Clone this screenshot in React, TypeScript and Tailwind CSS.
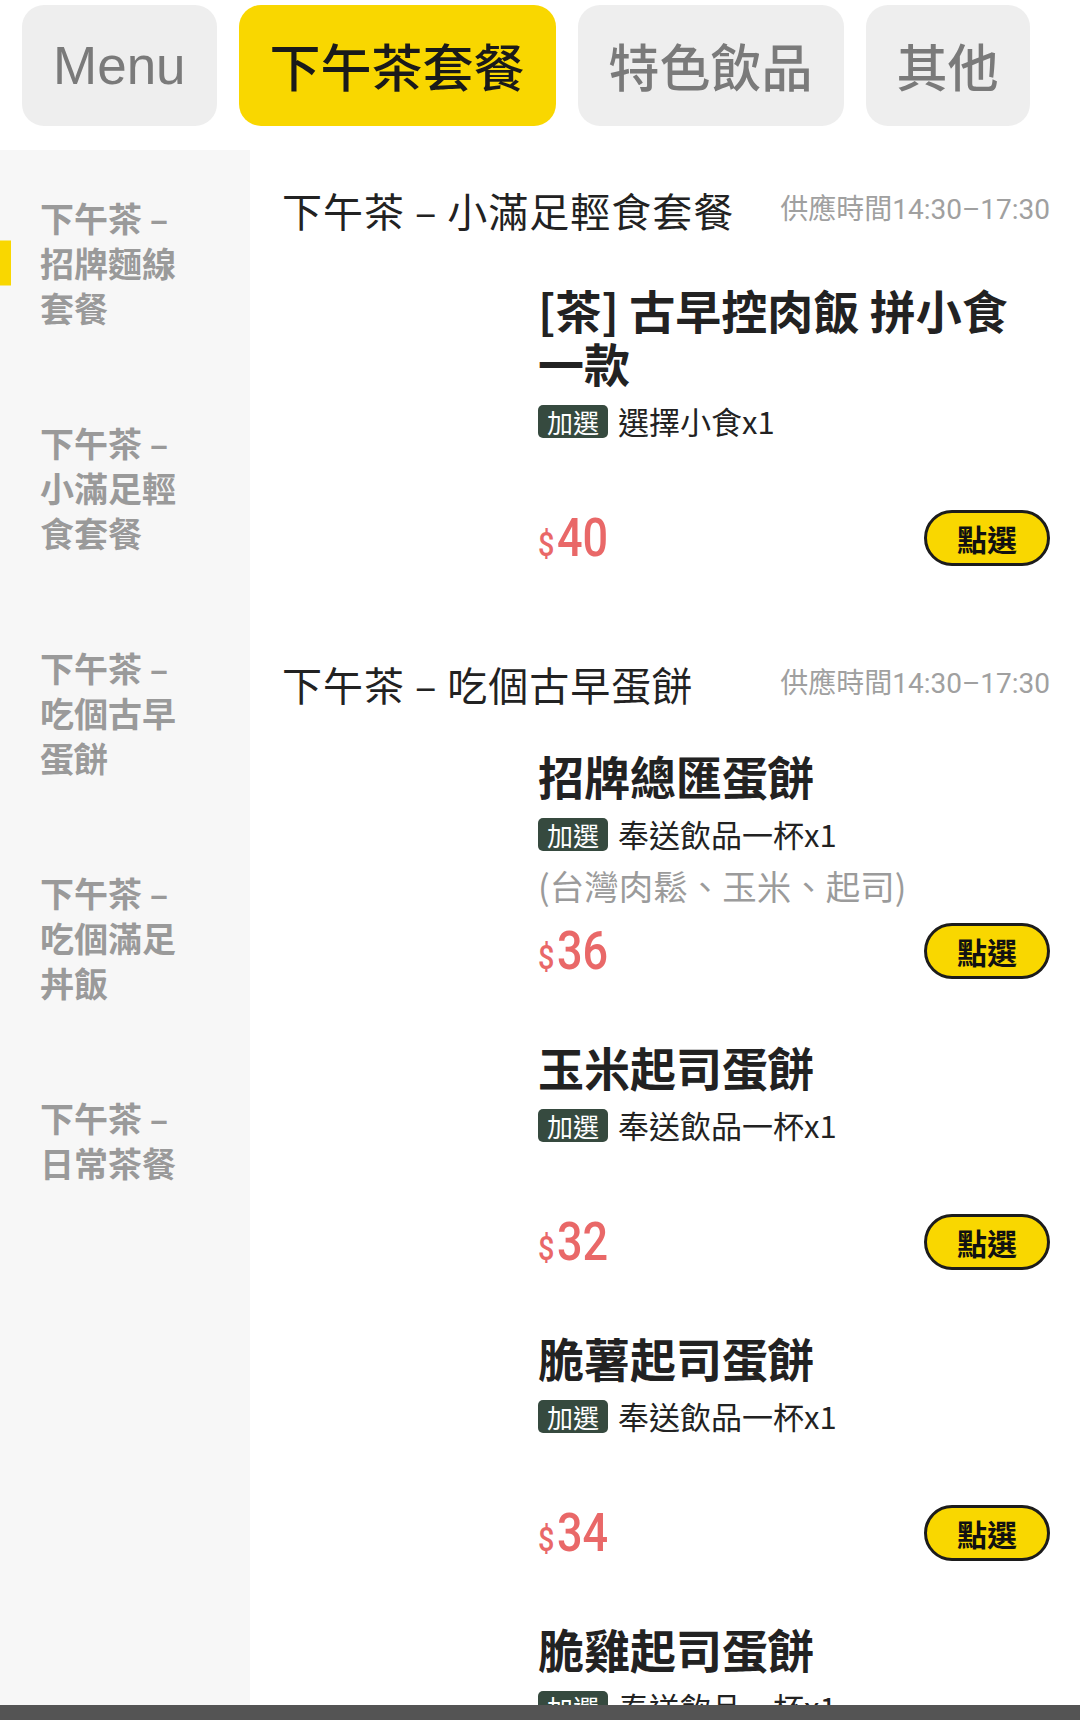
import React from "react";

type MenuItem = {
  name: string;
  addon: string;
  desc?: string;
  price: number;
};

type Section = {
  title: string;
  hours: string;
  items: MenuItem[];
};

const tabs = [
  { label: "Menu", active: false, latin: true },
  { label: "下午茶套餐", active: true },
  { label: "特色飲品", active: false },
  { label: "其他", active: false },
];

const categories = [
  "下午茶 – 招牌麵線套餐",
  "下午茶 – 小滿足輕食套餐",
  "下午茶 – 吃個古早蛋餅",
  "下午茶 – 吃個滿足丼飯",
  "下午茶 – 日常茶餐",
];

const sections: Section[] = [
  {
    title: "下午茶 – 小滿足輕食套餐",
    hours: "供應時間14:30–17:30",
    items: [{ name: "[茶] 古早控肉飯 拼小食一款", addon: "選擇小食x1", price: 40 }],
  },
  {
    title: "下午茶 – 吃個古早蛋餅",
    hours: "供應時間14:30–17:30",
    items: [
      { name: "招牌總匯蛋餅", addon: "奉送飲品一杯x1", desc: "(台灣肉鬆、玉米、起司)", price: 36 },
      { name: "玉米起司蛋餅", addon: "奉送飲品一杯x1", price: 32 },
      { name: "脆薯起司蛋餅", addon: "奉送飲品一杯x1", price: 34 },
      { name: "脆雞起司蛋餅", addon: "奉送飲品一杯x1", price: 34 },
    ],
  },
];

function Price({ value }: { value: number }) {
  return (
    <div className="flex items-baseline font-['Roboto',sans-serif] font-medium text-[#e96868]">
      <span className="inline-block w-[19px] origin-left scale-x-[0.85] text-[34px] leading-none">$</span>
      <span className="inline-block origin-left scale-x-[0.85] text-[53px] leading-none">{value}</span>
    </div>
  );
}

function ItemRow({ item, first }: { item: MenuItem; first?: boolean }) {
  return (
    <li className={first ? "flex gap-[26px] pt-[43px] pb-[26px]" : "flex gap-[26px] pt-[35px] pb-[26px]"}>
      <div className="w-[230px] shrink-0" />
      <div className="flex min-w-0 flex-1 flex-col">
        <h3 className="text-[46px] font-semibold leading-[53px] text-[#222]">{item.name}</h3>
        <div className="mt-[14px] flex h-[36px] items-center gap-[10px]">
          <span className="rounded-[5px] bg-[#364a3f] px-[9px] text-[26px] leading-[33px] text-white">
            加選
          </span>
          <span className="text-[31px] text-[#222]">{item.addon}</span>
        </div>
        <p className="mt-[11px] h-[44px] text-[34.5px] leading-[44px] text-[#9b9b9b]">{item.desc}</p>
        <div className="mt-[16px] flex h-[56px] items-center justify-between">
          <Price value={item.price} />
          <button className="h-[56px] w-[126px] rounded-full border-[3px] border-[#1c1c1c] bg-[#f9d700] text-[30px] font-bold text-[#111]">
            點選
          </button>
        </div>
      </div>
    </li>
  );
}

export default function App() {
  return (
    <div className="flex h-[1720px] w-[1080px] flex-col overflow-hidden bg-white font-['Noto_Sans_CJK_TC',sans-serif]">
      <nav className="flex h-[150px] shrink-0 gap-[22px] px-[22px] pt-[5px]">
        {tabs.map((t) => (
          <div
            key={t.label}
            className={
              t.active
                ? "flex h-[121px] items-center rounded-[22px] bg-[#f9d700] px-[31px] text-[51px] font-medium text-[#1a1a1a]"
                : "flex h-[121px] items-center rounded-[22px] bg-[#eeeeee] px-[31px] text-[51px] font-medium text-[#7a7a7a]"
            }
          >
            <span className={t.latin ? "font-['Liberation_Sans',sans-serif] text-[53px] font-normal" : ""}>
              {t.label}
            </span>
          </div>
        ))}
      </nav>

      <div className="flex min-h-0 flex-1">
        <aside className="w-[250px] shrink-0 bg-[#f7f7f7]">
          {categories.map((c, i) => (
            <div
              key={c}
              className="relative py-[45px] pl-[40px] pr-[60px] text-[34px] font-bold leading-[45px] text-[#9a9a9a]"
            >
              {i === 0 && (
                <span className="absolute left-0 top-1/2 h-[45px] w-[11px] -translate-y-1/2 bg-[#f9d700]" />
              )}
              {c}
            </div>
          ))}
        </aside>

        <main className="min-w-0 flex-1 overflow-hidden pl-[32px] pr-[30px]">
          {sections.map((s, si) => (
            <section key={s.title} className="pt-[30px] pb-[32px]">
              <header className="flex h-[60px] items-center justify-between">
                <h2 className="text-[40px] tracking-[1px] text-[#222]">{s.title}</h2>
                <span className="font-['Roboto','Noto_Sans_CJK_TC',sans-serif] text-[28px] text-[#a0a0a0]">
                  {s.hours}
                </span>
              </header>
              <ul>
                {s.items.map((item, ii) => (
                  <ItemRow key={item.name} item={item} first={si === 0 && ii === 0} />
                ))}
              </ul>
            </section>
          ))}
        </main>
      </div>

      <div className="h-[15px] shrink-0 bg-[#545454]" />
    </div>
  );
}
